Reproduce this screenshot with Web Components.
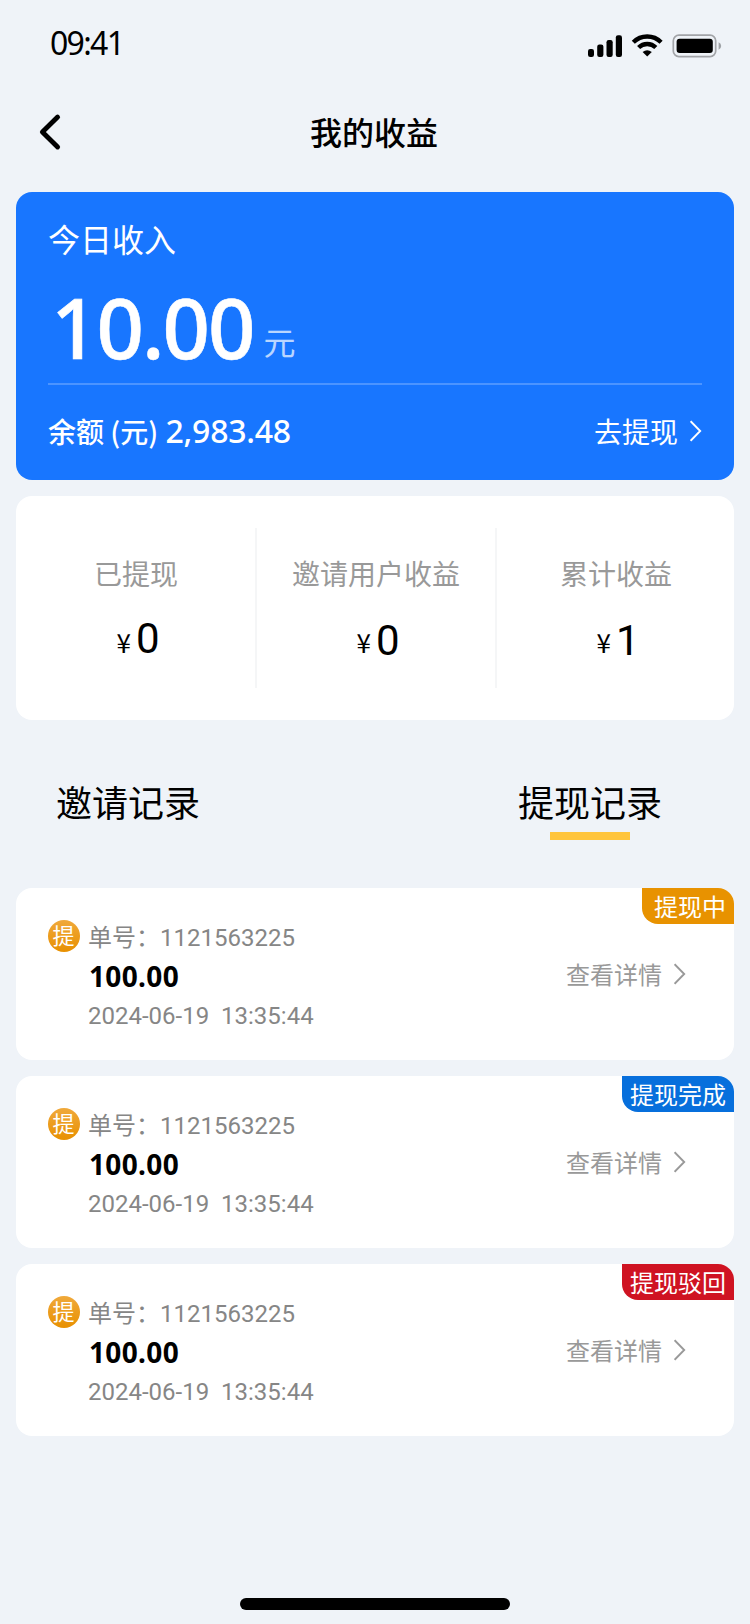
<!DOCTYPE html>
<html lang="zh-CN">
<head>
<meta charset="utf-8">
<title>我的收益</title>
<style>
html, body { margin: 0; }
body { width: 750px; height: 1624px; overflow: hidden; background: #eff3f8; font-family: "Noto Sans CJK SC", sans-serif; color: #000; }
</style>
</head>
<body>
<earnings-page></earnings-page>
<script>
function define(name, html, setup) {
  const tpl = document.createElement('template');
  tpl.innerHTML = html;
  customElements.define(name, class extends HTMLElement {
    constructor() {
      super();
      this.attachShadow({ mode: 'open' }).append(tpl.content.cloneNode(true));
    }
    connectedCallback() { if (setup) setup(this, this.shadowRoot); }
  });
}

define('status-bar', `
<style>
:host { display: flex; height: 88px; justify-content: space-between; box-sizing: border-box; padding: 22px 28px 0 50px; }
.time { font: 32px/42px "Noto Sans", sans-serif; letter-spacing: -1.7px; }
svg { display: block; margin-top: 10px; }
</style>
<span class="time">09:41</span>
<svg width="136" height="28" viewBox="0 0 136 28">
  <g><rect x="2" y="17" width="6" height="8" rx="2.2"/><rect x="11.2" y="12.6" width="6.2" height="12.4" rx="2.2"/><rect x="20.5" y="8" width="6.2" height="17" rx="2.2"/><rect x="29.8" y="3.2" width="6.2" height="21.8" rx="2.2"/></g>
  <g fill="none" stroke="#000" stroke-width="4.3"><path d="M47.3 10.3A19.6 19.6 0 0 1 75.1 10.3"/><path d="M52.6 15.6A12.1 12.1 0 0 1 69.8 15.6"/></g>
  <path d="M61.2 24.6L56.6 20.1Q61.2 16.3 65.8 20.1Z"/>
  <rect x="87.3" y="3.2" width="42.4" height="21.4" rx="5.6" fill="none" stroke="#a2a4a8" stroke-width="1.7"/>
  <rect x="90.6" y="6.8" width="36.2" height="14.2" rx="3"/>
  <path d="M132.6 10.2Q135.2 11.5 135.2 14Q135.2 16.5 132.6 17.8Z" fill="#9fa2a6"/>
</svg>`);

define('nav-bar', `
<style>
:host { display: grid; grid-template-columns: 70px 1fr 72px; height: 88px; align-items: center; }
svg { display: block; margin-left: 36px; }
h1 { margin: 0 0 2px; font-size: 32px; font-weight: 500; line-height: 40px; text-align: center; }
</style>
<svg width="28" height="40" viewBox="0 0 28 40"><path d="M21.6 5.1L6.4 20L21.6 35" fill="none" stroke="#000" stroke-width="4.9" stroke-linecap="round" stroke-linejoin="round"/></svg>
<h1><slot></slot></h1>`);

define('chevron-right', `
<style>:host { display: block; width: 12px; height: 22px; } svg { display: block; }</style>
<svg width="12" height="22" viewBox="0 0 12 22"><path d="M.6 1.2L10.2 11L.6 20.8" fill="none" stroke="currentColor" stroke-width="1.9"/></svg>`);

define('income-card', `
<style>
:host { display: block; height: 288px; box-sizing: border-box; background: #1876ff; border-radius: 16px; color: #fff; padding: 26px 32px 0; }
.label { font-size: 32px; line-height: 40px; }
.total { display: flex; align-items: baseline; height: 125px; border-bottom: 2px solid #4c94ff; }
.num { font: 500 83px/137px "Noto Sans", sans-serif; letter-spacing: -2px; padding-left: 3px; -webkit-text-stroke: .6px #fff; }
.unit { font-size: 32px; opacity: .7; margin-left: 10px; position: relative; top: -4px; }
.foot { display: flex; height: 92px; align-items: center; justify-content: space-between; }
.bal { display: flex; align-items: baseline; font-size: 28px; font-weight: 500; white-space: pre; }
.bal b { font: 500 32px/40px "Noto Sans", sans-serif; letter-spacing: -.25px; padding-left: 1px; }
.go { display: flex; align-items: center; font-size: 28px; gap: 12px; }
</style>
<div class="label"><slot name="label"></slot></div>
<div class="total"><span class="num"><slot name="total"></slot></span><span class="unit">元</span></div>
<div class="foot"><div class="bal"><span>余额 (元) </span><b><slot name="balance"></slot></b></div>
<div class="go"><span>去提现</span><chevron-right></chevron-right></div></div>`);

define('stat-row', `
<style>:host { display: grid; grid-template-columns: repeat(3, 240px); height: 224px; box-sizing: border-box; padding: 32px 0 40px; background: #fff; border-radius: 16px; margin-top: 16px; }
</style><slot></slot>`);

define('stat-item', `
<style>
:host { display: flex; flex-direction: column; align-items: center; height: 160px; position: relative; }
:host(:not(:last-child))::after { content: ""; position: absolute; right: -1px; top: 0; width: 2px; height: 160px; background: #f5f6f7; }
.label { color: #999; font-size: 28px; line-height: 40px; margin-top: 25px; }
.value { display: flex; align-items: baseline; font: 42px/56px Roboto, sans-serif; margin-top: 20px; padding-left: 4px; }
i { font: 26px/40px "Noto Sans CJK SC", sans-serif; margin-right: 5px; position: relative; top: -2px; }
:host(:first-child) .value { margin-top: 18px; }
:host(:first-child) i { top: 0; }
</style>
<div class="label"></div><div class="value"><i>¥</i><slot></slot></div>`,
(el, r) => { r.querySelector('.label').textContent = el.getAttribute('label'); });

define('record-tabs', `
<style>:host { display: flex; justify-content: space-between; height: 168px; box-sizing: border-box; padding: 57px 72px 0 40px; }</style><slot></slot>`);

define('record-tab', `
<style>
:host { display: flex; flex-direction: column; align-items: center; font-size: 36px; line-height: 48px; }
:host([active])::after { content: ""; width: 80px; height: 8px; background: #ffc53d; margin-top: 7px; }
</style><slot></slot>`);

define('record-card', `
<style>
:host { display: flex; position: relative; height: 172px; box-sizing: border-box; background: #fff; border-radius: 16px; padding: 32px 48px 0 32px; margin-bottom: 16px; color: #868686; font-size: 24px; }
.mark { width: 32px; height: 32px; border-radius: 50%; background: linear-gradient(#f0a93b, #e89000); color: #fff; font-size: 22px; line-height: 29px; text-align: center; text-indent: -1px; margin-right: 8px; }
.info { flex: 1; }
.no, .date { line-height: 32px; }
.no { display: flex; align-items: baseline; }
.no slot, .date { font-family: Roboto, sans-serif; }
.amount { font: 700 28px/40px "Noto Sans", sans-serif; letter-spacing: .35px; color: #000; margin: 2px 0 4px; padding-left: 1px; }
.date { white-space: pre; }
.more { display: flex; align-items: center; gap: 12px; height: 32px; margin-top: 38px; color: #999; }
.more span { margin-bottom: 2px; }
.state { position: absolute; top: 0; right: 0; height: 36px; line-height: 35px; padding: 0 8px; color: #fff; border-radius: 0 16px 0 16px; background: var(--state, #e89200); }
:host([short]) .state { padding-left: 12px; }
</style>
<div class="mark">提</div>
<div class="info"><div class="no"><span>单号：</span><slot name="no"></slot></div><div class="amount"><slot name="amount"></slot></div><div class="date"><slot name="date"></slot></div></div>
<div class="more"><span>查看详情</span><chevron-right></chevron-right></div>
<div class="state"><slot name="state"></slot></div>`);

define('earnings-page', `
<style>
:host { display: flex; flex-direction: column; height: 1624px; }
main { padding: 16px 16px 0; flex: 1; }
.home { width: 270px; height: 12px; border-radius: 6px; background: #000; margin: 0 auto 14px; }
</style>
<status-bar></status-bar>
<nav-bar>我的收益</nav-bar>
<main>
<income-card><span slot="label">今日收入</span><span slot="total">10.00</span><span slot="balance">2,983.48</span></income-card>
<stat-row><stat-item label="已提现">0</stat-item><stat-item label="邀请用户收益">0</stat-item><stat-item label="累计收益">1</stat-item></stat-row>
<record-tabs><record-tab>邀请记录</record-tab><record-tab active>提现记录</record-tab></record-tabs>
<record-card short><span slot="no">1121563225</span><span slot="amount">100.00</span><span slot="date">2024-06-19  13:35:44</span><span slot="state">提现中</span></record-card>
<record-card style="--state:#076fdc"><span slot="no">1121563225</span><span slot="amount">100.00</span><span slot="date">2024-06-19  13:35:44</span><span slot="state">提现完成</span></record-card>
<record-card style="--state:#cf1322"><span slot="no">1121563225</span><span slot="amount">100.00</span><span slot="date">2024-06-19  13:35:44</span><span slot="state">提现驳回</span></record-card>
</main>
<div class="home"></div>`);
</script>
</body>
</html>
